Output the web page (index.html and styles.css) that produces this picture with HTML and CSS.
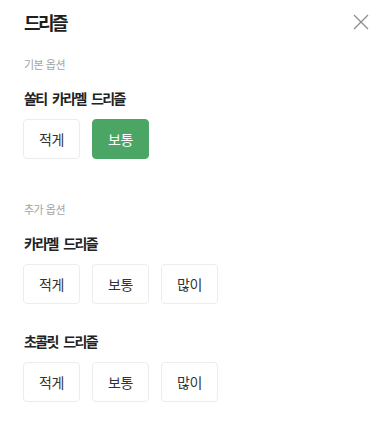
FILE: index.html
```html
<!DOCTYPE html>
<html lang="ko">
<head>
<meta charset="utf-8">
<link rel="stylesheet" href="styles.css">
</head>
<body>
<div class="sheet">
  <header class="header">
    <h1 class="title">드리즐</h1>
    <button class="close" aria-label="닫기">
      <svg width="16" height="16" viewBox="0 0 16 16"><path d="M1 1 L15 15 M15 1 L1 15" stroke="#8a8a8a" stroke-width="1.2" fill="none"/></svg>
    </button>
  </header>

  <section class="section">
    <div class="section-label">기본 옵션</div>
    <div class="group">
      <div class="group-title">쏠티 카라멜 드리즐</div>
      <div class="choices">
        <button class="choice">적게</button>
        <button class="choice selected">보통</button>
      </div>
    </div>
  </section>

  <section class="section extra">
    <div class="section-label">추가 옵션</div>
    <div class="group">
      <div class="group-title">카라멜 드리즐</div>
      <div class="choices">
        <button class="choice">적게</button>
        <button class="choice">보통</button>
        <button class="choice">많이</button>
      </div>
    </div>
    <div class="group next">
      <div class="group-title">초콜릿 드리즐</div>
      <div class="choices">
        <button class="choice">적게</button>
        <button class="choice">보통</button>
        <button class="choice">많이</button>
      </div>
    </div>
  </section>
</div>
</body>
</html>
```

FILE: styles.css
```css
html, body {
  margin: 0;
  padding: 0;
  background: #ffffff;
}
body {
  font-family: "Noto Sans CJK KR", "Noto Sans", sans-serif;
  color: #222222;
}
.sheet {
  padding: 10px 16px 0 23px;
}
.header {
  display: flex;
  align-items: center;
  justify-content: space-between;
  height: 24px;
}
.title {
  margin: 0;
  font-size: 18px;
  line-height: 24px;
  font-weight: 700;
  letter-spacing: -2.5px;
  color: #1e1e1e;
  padding-left: 1px;
}
.close {
  border: 0;
  background: none;
  padding: 0;
  width: 18px;
  height: 18px;
  display: flex;
  align-items: center;
  justify-content: center;
}
.section {
  padding-top: 22px;
}
.section.extra {
  padding-top: 42px;
}
.section-label {
  font-size: 11px;
  line-height: 16px;
  color: #a3a3a3;
  letter-spacing: -0.5px;
  padding-left: 1px;
}
.group {
  margin-top: 16px;
}
.group.next {
  margin-top: 27px;
}
.group-title {
  font-size: 14px;
  line-height: 20px;
  font-weight: 700;
  letter-spacing: -1.6px;
  word-spacing: 3px;
  color: #222222;
  padding-left: 1px;
}
.choices {
  display: flex;
  gap: 12px;
  margin-top: 11px;
}
.choice {
  width: 57px;
  height: 40px;
  box-sizing: border-box;
  border: 1px solid #ececec;
  border-radius: 4px;
  background: #ffffff;
  font-family: "Noto Sans CJK KR", "Noto Sans", sans-serif;
  font-size: 14px;
  letter-spacing: -0.5px;
  color: #333333;
  padding: 0;
}
.choice.selected {
  background: #4ba666;
  border-color: #4ba666;
  color: #ffffff;
}
```
